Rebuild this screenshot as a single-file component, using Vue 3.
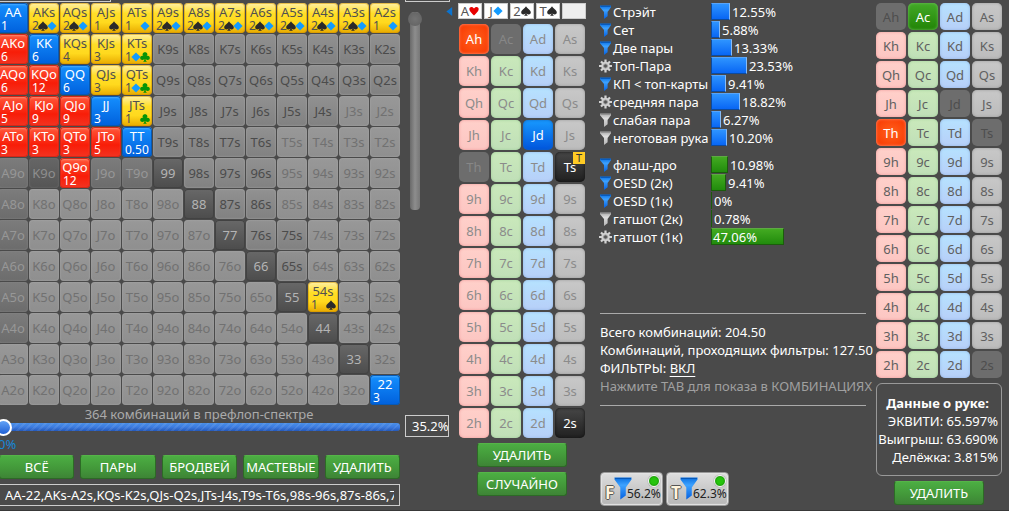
<script setup>
import { ref } from 'vue'

const ranks = ['A', 'K', 'Q', 'J', 'T', '9', '8', '7', '6', '5', '4', '3', '2']

const hits = {
  AA: ['1'], AKs: ['2', 'sd'], AQs: ['2', 'sd'], AJs: ['1', 's'], ATs: ['1', 'd'],
  A9s: ['2', 'sd'], A8s: ['2', 'sd'], A7s: ['2', 'sd'], A6s: ['2', 'sd'], A5s: ['2', 'sd'],
  A4s: ['2', 'sd'], A3s: ['2', 'sd'], A2s: ['1', 'd'],
  AKo: ['6'], KK: ['6'], KQs: ['4'], KJs: ['3'], KTs: ['1', 'dc'],
  AQo: ['6'], KQo: ['12'], QQ: ['6'], QJs: ['3'], QTs: ['1', 'dc'],
  AJo: ['5'], KJo: ['9'], QJo: ['9'], JJ: ['3'], JTs: ['1', 'c'],
  ATo: ['3'], KTo: ['3'], QTo: ['3'], JTo: ['5'], TT: ['0.50'],
  Q9o: ['12'], '54s': ['1', 's'], 22: ['3'],
}

const lowestSuited = [0, 12, 12, 10, 8, 8, 8, 9, 9, 9]

const cells = []
ranks.forEach((a, r) => {
  ranks.forEach((b, c) => {
    const kind = r === c ? 'pair' : c > r ? 'suited' : 'offsuit'
    const name = kind === 'pair' ? a + a : kind === 'suited' ? a + b + 's' : b + a + 'o'
    const hit = hits[name]
    let tone = 'out'
    if (hit) tone = 'hit'
    else if (kind === 'pair') tone = 'in'
    else if (kind === 'suited') tone = c <= (lowestSuited[r] ?? 0) ? 'in' : 'out'
    else if (name === 'K9o') tone = 'deep'
    else if (r === 5 && c < 5) tone = 'in'
    else if (c === 0 && r < 11) tone = 'in'
    cells.push({ name, kind, tone, count: hit?.[0], suits: hit?.[1] ?? '' })
  })
})

const suits = ['h', 'c', 'd', 's']
const deck = (active, dead) =>
  ranks.flatMap((r) => suits.map((s) => ({
    name: r + s, suit: s, active: active.includes(r + s), dead: dead.includes(r + s),
  })))
const boardDeck = deck(['Ah', 'Jd', 'Ts', '2s'], ['Ac', 'Th'])
const handDeck = deck(['Ac', 'Th'], ['Ah', 'Jd', 'Ts', '2s'])
const board = [['A', 'h'], ['J', 'd'], ['2', 's'], ['T', 's'], null]

const groups = [
  { tone: 'made', rows: [
    ['on', 'Стрэйт', 12.55], ['on', 'Сет', 5.88], ['on', 'Две пары', 13.33],
    ['gear', 'Топ-Пара', 23.53], ['on', 'КП < топ-карты', 9.41],
    ['gear', 'средняя пара', 18.82], ['off', 'слабая пара', 6.27],
    ['off', 'неготовая рука', '10.20'],
  ] },
  { tone: 'draw', rows: [
    ['on', 'флаш-дро', 10.98], ['on', 'OESD (2к)', 9.41], ['on', 'OESD (1к)', 0],
    ['off', 'гатшот (2к)', 0.78], ['gear', 'гатшот (1к)', 47.06],
  ] },
]
const barWidth = (v) => Math.max(1, Math.round(Number(v) * 1.55)) + 'px'

const presets = ['ВСЁ', 'ПАРЫ', 'БРОДВЕЙ', 'МАСТЕВЫЕ', 'УДАЛИТЬ']
const filters = [['F', '56.2%'], ['T', '62.3%']]
const rangeText = ref('AA-22,AKs-A2s,KQs-K2s,QJs-Q2s,JTs-J4s,T9s-T6s,98s-96s,87s-86s,76s-75s,65s,54s')
const percent = ref('35.2%')
const level = ref(0)

const suitPath = {
  h: 'M5 9.5 C3 7.3 .3 5.4 .3 3 C.3 .5 3.8 .1 5 2.5 C6.2 .1 9.7 .5 9.7 3 C9.7 5.4 7 7.3 5 9.5Z',
  d: 'M5 .6 L9.6 5 L5 9.4 L.4 5Z',
  s: 'M5 .2 C6 2.5 9.8 3.8 9.8 6.4 C9.8 8.6 7 9 5.6 7.5 C5.7 8.6 6.2 9.2 7 9.7 H3 C3.8 9.2 4.3 8.6 4.4 7.5 C3 9 .2 8.6 .2 6.4 C.2 3.8 4 2.5 5 .2Z',
  c: 'M5 .2 C7.6 .2 8 2.8 6.6 4 C8.3 3.2 9.9 4.3 9.8 6 C9.7 8.4 6.8 8.5 5.6 6.9 C5.7 8.3 6.1 9.2 7 9.7 H3 C3.9 9.2 4.3 8.3 4.4 6.9 C3.2 8.5 .3 8.4 .2 6 C.1 4.3 1.7 3.2 3.4 4 C2 2.8 2.4 .2 5 .2Z',
}
</script>

<template>
  <main class="page">
    <svg class="defs" width="0" height="0" aria-hidden="true">
      <defs>
        <linearGradient id="funnel-blue" x1="0" x2="0" y1="0" y2="1">
          <stop offset="0" stop-color="#0a6fe0" /><stop offset=".35" stop-color="#3da2ff" />
          <stop offset="1" stop-color="#0560e0" />
        </linearGradient>
        <linearGradient id="funnel-gray" x1="0" x2="0" y1="0" y2="1">
          <stop offset="0" stop-color="#a8a8a8" /><stop offset=".35" stop-color="#dedede" />
          <stop offset="1" stop-color="#b4b4b4" />
        </linearGradient>
      </defs>
    </svg>

    <section class="range">
      <div class="range-main">
        <div class="cut cut-left"></div>
        <div class="matrix">
          <button v-for="cell in cells" :key="cell.name" type="button" class="cell" :class="[cell.kind, cell.tone]">
            <span class="hand">{{ cell.name }}</span>
            <span v-if="cell.count" class="combo">
              <span>{{ cell.count }}</span>
              <span class="combo-suits">
                <svg v-for="s in cell.suits" :key="s" :class="'suit-' + s" viewBox="0 0 10 10"><path :d="suitPath[s]" /></svg>
              </span>
            </span>
          </button>
        </div>
        <label class="caption" for="level">364 комбинаций в префлоп-спектре</label>
        <input id="level" v-model="level" class="level" type="range" min="0" max="100">
        <div class="low">0%</div>
        <div class="presets">
          <button v-for="p in presets" :key="p" type="button" class="green">{{ p }}</button>
        </div>
        <input v-model="rangeText" class="field range-text" type="text" aria-label="Спектр">
      </div>
      <div class="range-side">
        <div class="cut"></div>
        <div class="scroll"><div class="knob"></div></div>
        <input v-model="percent" class="field percent" type="text" aria-label="Процент">
      </div>
    </section>

    <section class="board">
      <div class="chips">
        <svg class="arrow" viewBox="0 0 7 10"><path d="M6.5 0 V10 L0 5Z" /></svg>
        <button v-for="(card, i) in board" :key="i" type="button" class="chip" :class="{ empty: !card }">
          <template v-if="card">
            {{ card[0] }}<svg :class="'suit-' + card[1]" viewBox="0 0 10 10"><path :d="suitPath[card[1]]" /></svg>
          </template>
        </button>
      </div>
      <div class="deck faded">
        <button v-for="card in boardDeck" :key="card.name" type="button" class="card" :class="[card.suit, { active: card.active, dead: card.dead }]">
          {{ card.name }}<span v-if="card.name === 'Ts'" class="tag">T</span>
        </button>
      </div>
      <div class="board-actions">
        <button type="button" class="green">УДАЛИТЬ</button>
        <button type="button" class="green">СЛУЧАЙНО</button>
      </div>
    </section>

    <section class="stats">
      <div v-for="group in groups" :key="group.tone" class="group" :class="group.tone">
        <div v-for="[icon, label, value] in group.rows" :key="label" class="stat">
          <svg v-if="icon === 'gear'" class="icon" viewBox="0 0 13 14">
            <g stroke="#d4d4d4" stroke-width="2.2">
              <path d="M6.5 .5 V13.5 M0 7 H13 M2 2.5 L11 11.5 M11 2.5 L2 11.5" />
            </g>
            <circle cx="6.5" cy="7" r="4.3" fill="#d0d0d0" />
            <circle cx="6.5" cy="7" r="2" fill="#555" stroke="#999" />
          </svg>
          <svg v-else class="icon" viewBox="0 0 13 14">
            <path d="M1 .6 H12 V2.2 L8.6 7 V11.2 L5 13.9 V7 L1 2.2Z" :fill="icon === 'on' ? 'url(#funnel-blue)' : 'url(#funnel-gray)'" />
            <path d="M1.5 1.4 H11.5" :stroke="icon === 'on' ? '#0758b8' : '#929292'" />
          </svg>
          <span class="label">{{ label }}</span>
          <span class="meter" :class="{ inside: value > 40 }">
            <span class="bar" :class="{ thin: value < 1 }" :style="{ width: barWidth(value) }"></span>
            <span class="value">{{ value }}%</span>
          </span>
        </div>
      </div>
      <div class="summary">
        <p>Всего комбинаций: 204.50</p>
        <p>Комбинаций, проходящих фильтры: 127.50</p>
        <p>ФИЛЬТРЫ: <a href="#">ВКЛ</a></p>
        <p class="hint">Нажмите TAB для показа в КОМБИНАЦИЯХ</p>
      </div>
      <div class="filters">
        <button v-for="[street, pct] in filters" :key="street" type="button" class="filter">
          <b>{{ street }}</b>
          <svg class="funnel" viewBox="0 0 18 23">
            <path d="M.5 .5 H17.5 V2.5 L11.8 10.5 V18.5 L6.3 22.5 V10.5 L.5 2.5Z" fill="url(#funnel-blue)" />
            <path d="M1 1.5 H17" stroke="#0758b8" />
          </svg>
          <span class="pct">{{ pct }}</span>
          <i class="lamp"></i>
        </button>
      </div>
    </section>

    <section class="hero">
      <div class="deck short">
        <button v-for="card in handDeck" :key="card.name" type="button" class="card" :class="[card.suit, { active: card.active, dead: card.dead }]">{{ card.name }}</button>
      </div>
      <div class="equity">
        <h2>Данные о руке:</h2>
        <p>ЭКВИТИ: 65.597%</p>
        <p>Выигрыш: 63.690%</p>
        <p>Делёжка: 3.815%</p>
      </div>
      <button type="button" class="green clear">УДАЛИТЬ</button>
    </section>
  </main>
</template>

<style>
body { background: #4a4a4a; }
</style>

<style scoped>
.page {
  box-sizing: border-box;
  min-height: 100vh;
  display: grid;
  grid-template-columns: 458fr 142fr 276fr 133fr;
  overflow: hidden;
  background: #4a4a4a;
  border-bottom: 1px solid #383838;
  color: #fff;
  font: 13px/18px "Noto Sans", "Open Sans", sans-serif;
}
.page * { box-sizing: border-box; }
.page section { min-width: 0; }
.defs { position: absolute; }
button, input { font: inherit; color: inherit; margin: 0; padding: 0; border: 0; min-width: 0; }
p, h2 { margin: 0; font-size: 13px; }
svg { display: block; flex: none; }

.suit-h { fill: #e80000; }
.suit-d { fill: #129bff; }
.suit-s { fill: #2a2a2a; }
.suit-c { fill: #079407; }

.range { display: flex; }
.range-main { flex: 1; min-width: 0; margin-left: -2px; }
.range-side { width: 58px; flex: none; padding-left: 5px; }
.cut { width: 45px; height: 2px; margin-bottom: 1px; border: 1px solid #ccc; border-top: 0; }
.cut-left { width: 113px; }

.matrix { display: grid; grid-template-columns: repeat(13, minmax(0, 1fr)); gap: 1px; }
.cell {
  height: 30px;
  display: flex;
  flex-direction: column;
  align-items: center;
  justify-content: center;
  border-radius: 4px;
  line-height: 14px;
  overflow: hidden;
  white-space: nowrap;
  background: linear-gradient(#989898, #8f8f8f);
  color: #717171;
  box-shadow: inset 0 0 2px #aaa;
}
.suited.in { background: linear-gradient(#919191, #818181); color: #4b4b4b; }
.offsuit.in { background: linear-gradient(#7c7c7c, #6c6c6c); color: #979797; box-shadow: inset 0 0 2px #888; }
.offsuit.deep { background: linear-gradient(#666, #555); color: #8e8e8e; box-shadow: inset 0 0 2px #777; }
.pair.in { background: linear-gradient(#686868, #4c4c4c); color: #b4b4b4; box-shadow: inset 0 0 0 1px #424242; }
.cell.hit { justify-content: flex-start; padding-top: 3px; line-height: 13px; }
.pair.hit { background: linear-gradient(#1590ff, #0060dc); color: #fff; box-shadow: inset 0 0 0 1px #0759b4, inset 0 2px 2px #48acff; }
.suited.hit { background: linear-gradient(#fff0a8, #ffde28 35%, #ffd91e 65%, #e8aa00); color: #505050; box-shadow: inset 0 0 0 1px #d0920088; }
.offsuit.hit { background: linear-gradient(#ff5a3c, #f81d08 60%, #f33422); color: #fff; box-shadow: inset 0 0 0 1px #d32818, inset 0 2px 2px #ff8a70; }
.combo { width: 100%; display: flex; justify-content: space-between; align-items: center; padding: 0 2px 0 3px; font-size: 12px; }
.combo-suits { display: flex; }
.combo-suits svg { width: 10px; height: 10px; margin-left: -1px; }

.caption { display: block; height: 18px; text-align: center; color: #aaa; }
.level { -webkit-appearance: none; appearance: none; display: block; width: calc(100% + 3px); height: 8px; margin-left: -3px; border-radius: 3px;
  background: repeating-linear-gradient(135deg, #ffffff14 0 2px, #0000 2px 5px), linear-gradient(#4a8fe8, #3d7ce0 50%, #2459ba); }
.level::-webkit-slider-thumb { -webkit-appearance: none; width: 17px; height: 17px; border: 2px solid #fff; border-radius: 50%; background: linear-gradient(#62a2f6, #2060d4); }
.low { height: 24px; padding-top: 4px; color: #1687d8; }
.presets { display: grid; grid-template-columns: repeat(5, minmax(0, 1fr)); gap: 6px; margin-left: 1px; }
.green {
  height: 24px;
  border: 1px solid #2d6a26;
  border-top-color: #55b548;
  border-radius: 3px;
  background: linear-gradient(#4cae43, #43993a 55%, #3e8436);
  color: #fff;
  line-height: 20px;
  white-space: nowrap;
}
.field { display: block; border: 1px solid #ccc; background: #4a4a4a; }
.range-text { width: calc(100% - 1px); height: 22px; margin: 5px 0 0 1px; padding: 0 5px; }

.scroll { width: 10px; height: 198px; margin: 10px 0 0 5px; border-radius: 4px; background: linear-gradient(90deg, #6a6a6a, #8d8d8d 50%, #777); }
.knob { width: 14px; height: 14px; margin-left: -2px; border-radius: 50%; background: radial-gradient(#737373, #606060); }
.percent { width: 44px; height: 22px; margin-top: 205px; padding-left: 6px; }

.chips { display: flex; align-items: center; gap: 2px; height: 16px; margin: 3px 0 5px -12px; }
.arrow { width: 7px; height: 9px; margin-right: 3px; fill: #0b73cf; }
.chip { width: 24px; height: 16px; display: flex; align-items: center; justify-content: center; border: 1px solid #ccc; background: #fff; color: #555; line-height: 14px; }
.chip svg { width: 10px; height: 10px; }
.chip.empty { background: #eee; }
.deck { display: grid; grid-template-columns: repeat(4, 30px); gap: 2px; margin-left: 1px; }
.card { position: relative; height: 30px; border-radius: 5px; color: #606060; }
.faded .card { color: #8b8b8b; }
.short { margin: 3px 0 0; }
.short .card { height: 27px; line-height: 24px; }
.h { background: linear-gradient(#ffd0ca, #fcc6c2); box-shadow: inset 0 0 3px #ee9898; }
.c { background: linear-gradient(#cae9bb, #c0dfb8); box-shadow: inset 0 0 3px #9fce98; }
.d { background: linear-gradient(#b6e2ff, #b7cff8); box-shadow: inset 0 0 3px #92b5e4; }
.s { background: linear-gradient(#c8c8c8, #bcbcbc); box-shadow: inset 0 0 3px #999; }
.deck .active { color: #fff; }
.h.active { background: radial-gradient(#ff601c, #f83600); box-shadow: inset 0 0 3px #ff9a80; }
.c.active { background: linear-gradient(#43a928, #218406); box-shadow: inset 0 0 3px #71bf60; }
.d.active { background: linear-gradient(#189aff, #0054dc); box-shadow: inset 0 0 3px #1262bd; }
.s.active { background: linear-gradient(#464646, #202020); box-shadow: inset 0 0 3px #111; }
.card.dead { background: #6d6d6d; color: #4e4e4e; box-shadow: none; }
.faded .card.dead { color: #878787; }
.tag { position: absolute; top: 0; right: 0; width: 12px; height: 12px; background: #ffcb24; color: #333; font-size: 11px; line-height: 12px; }
.board-actions { display: grid; gap: 5px; width: 90px; margin: 5px 0 0 19px; }

.stats { padding-top: 3px; white-space: nowrap; }
.group { margin-bottom: 9px; }
.stat { display: grid; grid-template-columns: 13px 98px 1fr; height: 18px; }
.icon { width: 13px; height: 14px; align-self: center; margin-left: -1px; }
.meter { display: flex; align-items: flex-start; }
.bar { flex: none; height: 17px; border: 1px solid #0d4a9d; border-top-color: #58a4f8; border-right-color: #88bbf5; background: linear-gradient(#2e94ff, #0866f4); margin-right: 2px; }
.draw .bar { border-color: #1b5c0c; border-top-color: #5ea944; background: linear-gradient(#43aa22, #218b0c); }
.bar.thin { border-width: 0 0 0 1px; }
.inside { display: grid; justify-items: start; }
.inside > * { grid-area: 1 / 1; }
.inside .value { padding-left: 2px; }

.summary { width: 266px; margin-top: 67px; padding: 9px 0 10px; border: solid #aaa; border-width: 1px 0; }
.summary a { color: #fff; text-underline-offset: 3px; }
.hint { color: #a0a0a0; }
.filters { display: flex; gap: 3px; margin-top: 66px; }
.filter { position: relative; width: 63px; height: 34px; display: flex; align-items: flex-end; padding: 0 3px 3px 4px; border: 1px solid #999; border-radius: 4px; background: linear-gradient(#dedede, #b6b6b6); color: #222; box-shadow: inset 0 0 1px 1px #e4e4e4; }
.filter b { width: 9px; font-size: 17px; line-height: 18px; color: #fff4dc; text-shadow: 1px 0 #555, -1px 0 #555, 0 1px #555, 0 -1px #555; }
.funnel { width: 18px; height: 23px; margin-bottom: 2px; }
.filter .pct { margin-left: -5px; line-height: 16px; font-size: 12px; }
.lamp { position: absolute; top: 2px; right: 2px; width: 12px; height: 12px; border: 1px solid #f4f4f4; border-radius: 50%; background: radial-gradient(#25c40c 40%, #167a08); box-shadow: 0 0 1px #555; }

.equity { width: 126px; height: 93px; margin-top: 5px; padding: 10px 3px 0 0; border: 1px solid #999; border-radius: 6px; text-align: right; white-space: nowrap; }
.equity h2 { text-align: center; font-weight: 700; line-height: 18px; }
.clear { display: block; width: 90px; margin: 5px 0 0 18px; }
</style>
